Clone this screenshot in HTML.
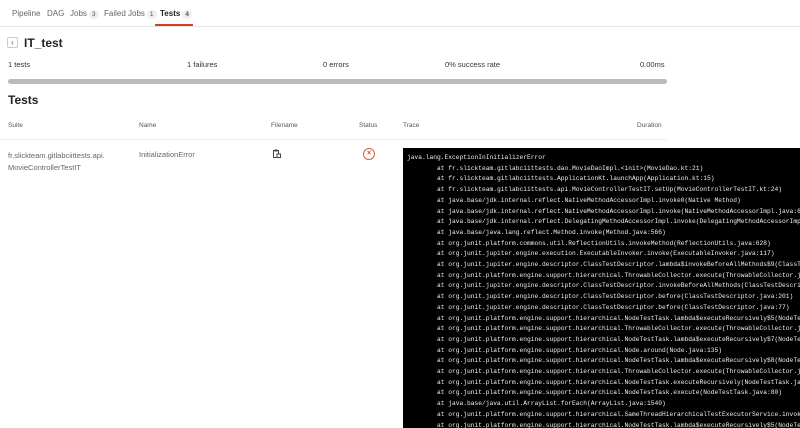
<!DOCTYPE html>
<html><head><style>
body{margin:0;width:800px;height:416px;overflow:hidden;background:#fff;font-family:"Liberation Sans",sans-serif;color:#333;position:relative}
.a{position:absolute;white-space:nowrap}
.tab{font-size:8px;color:#666;top:9px}
.b{display:inline-block;background:#eee;border-radius:5px;font-size:6.5px;padding:1px 3px;margin-left:2px;color:#555}
.s{font-size:7.5px;top:60px;color:#333}
.h{font-size:6.5px;color:#555;top:122px}
.c{font-size:7.5px;color:#666}
pre{margin:0;position:absolute;left:403px;top:148px;width:420px;height:280px;background:#000;color:#eee;font-family:"Liberation Mono",monospace;font-size:6.25px;line-height:10.7px;padding:5px 0 0 4px;box-sizing:border-box;overflow:hidden}
</style></head><body>
<div class="a tab" style="left:12px">Pipeline</div>
<div class="a tab" style="left:47px">DAG</div>
<div class="a tab" style="left:70px">Jobs<span class="b">3</span></div>
<div class="a tab" style="left:104px">Failed Jobs<span class="b">1</span></div>
<div class="a tab" style="left:160px;color:#222;font-weight:bold">Tests<span class="b">4</span></div>
<div class="a" style="left:155px;top:24px;width:38px;height:2px;background:#db3b21"></div>
<div class="a" style="left:0;top:26px;width:800px;height:1px;background:#e5e5e5"></div>
<div class="a" style="left:7px;top:37px;width:11px;height:11px;border:1px solid #ccc;border-radius:2px;box-sizing:border-box;font-size:8px;text-align:center;line-height:9px;color:#555">‹</div>
<div class="a" style="left:24px;top:36px;font-size:12px;font-weight:bold;color:#222">IT_test</div>
<div class="a s" style="left:8px">1 tests</div>
<div class="a s" style="left:187px">1 failures</div>
<div class="a s" style="left:323px">0 errors</div>
<div class="a s" style="left:445px">0% success rate</div>
<div class="a s" style="left:640px">0.00ms</div>
<div class="a" style="left:8px;top:79px;width:659px;height:5px;background:#bbb;border-radius:3px"></div>
<div class="a" style="left:8px;top:93px;font-size:12px;font-weight:bold;color:#222">Tests</div>
<div class="a h" style="left:8px">Suite</div>
<div class="a h" style="left:139px">Name</div>
<div class="a h" style="left:271px">Filename</div>
<div class="a h" style="left:359px">Status</div>
<div class="a h" style="left:403px">Trace</div>
<div class="a h" style="left:637px">Duration</div>
<div class="a" style="left:0;top:139px;width:667px;height:1px;background:#eee"></div>
<div class="a c" style="left:8px;top:150px;line-height:12px">fr.slickteam.gitlabciittests.api.<br>MovieControllerTestIT</div>
<div class="a c" style="left:139px;top:150px">InitializationError</div>
<svg class="a" style="left:273px;top:149px" width="8" height="9" viewBox="0 0 8 9"><rect x="0.5" y="1.5" width="5" height="7" fill="none" stroke="#444"/><rect x="1.5" y="0.5" width="3" height="2" fill="#444"/><rect x="4" y="5" width="3.5" height="3.5" fill="#fff" stroke="#444"/></svg>
<div class="a" style="left:363px;top:148px;width:12px;height:12px;border:1px solid #e05a45;border-radius:50%;box-sizing:border-box;color:#db3b21;font-size:7px;text-align:center;line-height:10px;font-weight:bold">×</div>
<pre>java.lang.ExceptionInInitializerError
        at fr.slickteam.gitlabciittests.dao.MovieDaoImpl.&lt;init&gt;(MovieDao.kt:21)
        at fr.slickteam.gitlabciittests.ApplicationKt.launchApp(Application.kt:15)
        at fr.slickteam.gitlabciittests.api.MovieControllerTestIT.setUp(MovieControllerTestIT.kt:24)
        at java.base/jdk.internal.reflect.NativeMethodAccessorImpl.invoke0(Native Method)
        at java.base/jdk.internal.reflect.NativeMethodAccessorImpl.invoke(NativeMethodAccessorImpl.java:62)
        at java.base/jdk.internal.reflect.DelegatingMethodAccessorImpl.invoke(DelegatingMethodAccessorImpl.java:43)
        at java.base/java.lang.reflect.Method.invoke(Method.java:566)
        at org.junit.platform.commons.util.ReflectionUtils.invokeMethod(ReflectionUtils.java:628)
        at org.junit.jupiter.engine.execution.ExecutableInvoker.invoke(ExecutableInvoker.java:117)
        at org.junit.jupiter.engine.descriptor.ClassTestDescriptor.lambda$invokeBeforeAllMethods$9(ClassTestDescriptor.java:384)
        at org.junit.platform.engine.support.hierarchical.ThrowableCollector.execute(ThrowableCollector.java:73)
        at org.junit.jupiter.engine.descriptor.ClassTestDescriptor.invokeBeforeAllMethods(ClassTestDescriptor.java:383)
        at org.junit.jupiter.engine.descriptor.ClassTestDescriptor.before(ClassTestDescriptor.java:201)
        at org.junit.jupiter.engine.descriptor.ClassTestDescriptor.before(ClassTestDescriptor.java:77)
        at org.junit.platform.engine.support.hierarchical.NodeTestTask.lambda$executeRecursively$5(NodeTestTask.java:132)
        at org.junit.platform.engine.support.hierarchical.ThrowableCollector.execute(ThrowableCollector.java:73)
        at org.junit.platform.engine.support.hierarchical.NodeTestTask.lambda$executeRecursively$7(NodeTestTask.java:125)
        at org.junit.platform.engine.support.hierarchical.Node.around(Node.java:135)
        at org.junit.platform.engine.support.hierarchical.NodeTestTask.lambda$executeRecursively$8(NodeTestTask.java:123)
        at org.junit.platform.engine.support.hierarchical.ThrowableCollector.execute(ThrowableCollector.java:73)
        at org.junit.platform.engine.support.hierarchical.NodeTestTask.executeRecursively(NodeTestTask.java:122)
        at org.junit.platform.engine.support.hierarchical.NodeTestTask.execute(NodeTestTask.java:80)
        at java.base/java.util.ArrayList.forEach(ArrayList.java:1540)
        at org.junit.platform.engine.support.hierarchical.SameThreadHierarchicalTestExecutorService.invokeAll(SameThreadHierarchicalTestExecutorService.java:38)
        at org.junit.platform.engine.support.hierarchical.NodeTestTask.lambda$executeRecursively$5(NodeTestTask.java:139)
        at org.junit.platform.engine.support.hierarchical.ThrowableCollector.execute(ThrowableCollector.java:73)
        at org.junit.platform.engine.support.hierarchical.NodeTestTask.lambda$executeRecursively$7(NodeTestTask.java:125)</pre>
</body></html>
